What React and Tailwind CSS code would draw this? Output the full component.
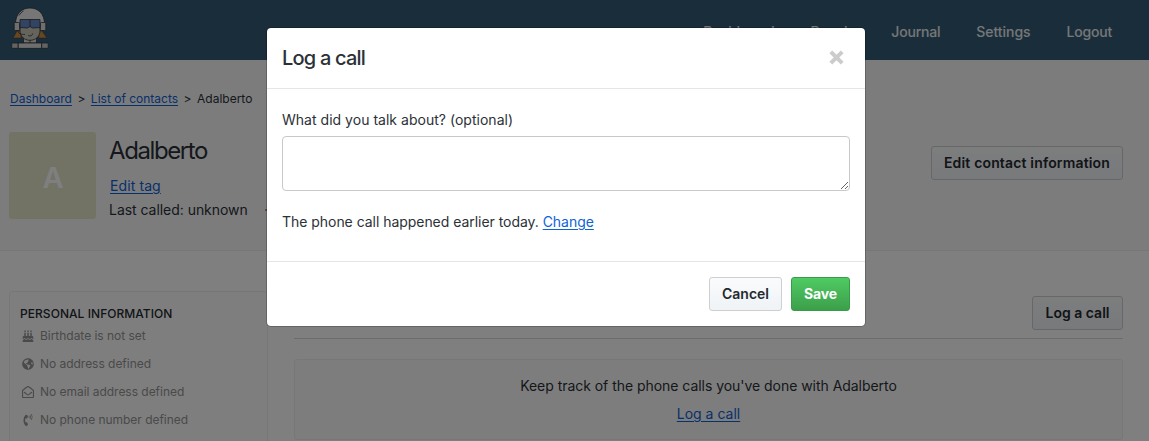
import { FaBirthdayCake, FaGlobeAmericas, FaRegEnvelopeOpen, FaPhoneVolume } from "react-icons/fa";

const link = "text-[#0f62d6] underline underline-offset-2";
const button =
  "h-[34px] rounded-[3px] border border-[#cdcfd1] bg-linear-to-b from-[#fafbfc] to-[#eff3f6] pb-0.5 text-[14px] font-semibold text-[#24292e] whitespace-nowrap flex items-center justify-center";

function Logo() {
  return (
    <svg width="38" height="43" viewBox="0 0 38 43" className="block" stroke="#30343c" strokeWidth="0.8">
      <path d="M6 24 2.200 31h8V24zM31 24l4.800 7h-8V24z" fill="#cf8f40" strokeWidth="0.4" />
      <path d="M12.500 30h13v6h-13z" fill="#dcdcdc" />
      <path d="M19 32v4" />
      <path d="M9 19v5c0 5 4 9.300 10 9.300S29 29 29 24v-5z" fill="#c9c6b8" />
      <path d="M4.500 17C4.500 7 10.500 1 19 1s14.500 6 14.500 16z" fill="#ececec" />
      <path d="M8 8.500c1.200-2 2.600-3.500 4.500-4.500" fill="none" />
      <rect x="3.200" y="15.500" width="5.500" height="8" rx="1" fill="#dedede" />
      <rect x="29.300" y="15.500" width="5.500" height="8" rx="1" fill="#dedede" />
      <path d="M9 12.500h20v8l-7.500.5-2.500-1.500L16.500 21 9 20.500z" fill="#6488c4" />
      <path d="M19 12.500v7" />
      <path d="M7 24c0 2.500 3 3.500 7 3.500M17 28c1 1.600 4.500 1.300 4.500-1.500" fill="none" />
      <rect x="0.700" y="36" width="6.500" height="5.300" rx="0.800" fill="#c6c6c6" />
      <rect x="7.200" y="36" width="23.500" height="5.300" fill="#dcdcdc" />
      <rect x="30.700" y="36" width="6.500" height="5.300" rx="0.800" fill="#c6c6c6" />
    </svg>
  );
}

function Fact({ icon: Icon, children }) {
  return (
    <li className="flex h-7 items-center text-[12px] tracking-[-0.03px] text-[#949494]">
      <span className="mr-[5px] flex w-[14px] justify-center text-[12px]">
        <Icon />
      </span>
      {children}
    </li>
  );
}

function Header() {
  return (
    <header className="flex h-[60px] bg-[#345a74] pl-[11px] pr-[37px]">
      <div className="pt-[7px]">
        <Logo />
      </div>
      <nav className="ml-auto flex items-center gap-[36px] pt-[3px] text-[14px] font-medium tracking-[-0.2px] text-white/90">
        <a>Dashboard</a>
        <a>People</a>
        <a>Journal</a>
        <a className="tracking-[-0.05px]">Settings</a>
        <a>Logout</a>
      </nav>
    </header>
  );
}

function ContactHeader() {
  return (
    <section className="h-[191px] border-b border-[#eee] bg-[#f9f9fb] pl-[10px] pr-[26px]">
      <div className="flex h-[72px] items-start gap-[5.5px] pt-[29px] text-[12px] leading-5">
        <a className={link}>Dashboard</a>
        <span>&gt;</span>
        <a className={link}>List of contacts</a>
        <span>&gt;</span>
        <span>Adalberto</span>
      </div>
      <div className="-ml-px flex">
        <div className="flex size-[87px] items-center justify-center rounded-[3px] bg-[#e5e5cb] pt-1 pl-px text-[29px] font-semibold text-white">
          A
        </div>
        <div className="ml-[13px]">
          <h1 className="mt-[3px] text-[24px] leading-8 tracking-[-1.4px]">Adalberto</h1>
          <div className="mt-[7px] pl-px text-[14px] leading-6 tracking-[0.1px]">
            <a className={link}>Edit tag</a>
          </div>
          <div className="flex items-center text-[14px] leading-6 tracking-[-0.04px]">
            Last called: unknown
            <span className="ml-[17px] h-0.5 w-1 bg-[#c98f70]" />
          </div>
        </div>
        <div className={`${button} ml-auto mt-[14px] w-[192px] tracking-[0.16px]`}>Edit contact information</div>
      </div>
    </section>
  );
}

function Body() {
  return (
    <main className="flex h-[190px] items-start bg-white pl-[9px] pr-[26px]">
      <aside className="mt-10 h-[200px] w-[259px] shrink-0 rounded-[3px] border border-[#eee] bg-[#fdfdfd] pl-[11px] pt-[12px]">
        <h3 className="-ml-px text-[12px] font-medium leading-5 tracking-[0.05px] text-[#24292e]">PERSONAL INFORMATION</h3>
        <ul className="-mt-0.5">
          <Fact icon={FaBirthdayCake}>Birthdate is not set</Fact>
          <Fact icon={FaGlobeAmericas}>No address defined</Fact>
          <Fact icon={FaRegEnvelopeOpen}>No email address defined</Fact>
          <Fact icon={FaPhoneVolume}>No phone number defined</Fact>
        </ul>
      </aside>
      <div className="ml-[26px] flex-1 pt-[45px]">
        <div className="flex h-[43px] justify-end border-b border-[#d9d9d9]">
          <div className={`${button} w-[91px]`}>Log a call</div>
        </div>
        <div className="mt-5 flex h-[81px] flex-col items-center rounded-[3px] border border-[#eee] bg-[#fbfbfb] pt-[14px] text-[14px] leading-6">
          <p className="tracking-[-0.04px]">Keep track of the phone calls you've done with Adalberto</p>
          <a className={`${link} mt-1`}>Log a call</a>
        </div>
      </div>
    </main>
  );
}

function CallDialog() {
  return (
    <div className="flex h-[300px] w-[600px] flex-col rounded-[5px] border border-black/20 bg-white bg-clip-padding">
      <div className="flex h-[61px] items-center justify-between border-b border-[#e5e5e5] pl-[15px] pr-[21px]">
        <h2 className="text-[20px] font-medium tracking-[-0.8px]">Log a call</h2>
        <svg width="15" height="15" viewBox="0 0 15 15" stroke="#ccc" strokeWidth="4" className="-mt-0.5">
          <path d="m1.800 1.800 11.400 11.400M13.200 1.800 1.800 13.200" />
        </svg>
      </div>
      <div className="h-[172px] px-[15px] pt-5 text-[14px] leading-[22px] tracking-[-0.04px]">
        <label className="block tracking-[0.02px]">What did you talk about? (optional)</label>
        <textarea className="mt-[5px] block h-[55px] w-full resize rounded-[4px] border border-[#c8c8c8]" />
        <p className="mt-5">
          The phone call happened earlier today. <a className={link}>Change</a>
        </p>
      </div>
      <div className="flex flex-1 justify-end gap-[9px] border-t border-[#e5e5e5] px-[15px] pt-[15px]">
        <button className={`${button} w-[73px]`}>Cancel</button>
        <button className="h-[34px] w-[59px] rounded-[3px] border border-[#389b47] bg-linear-to-b from-[#4fcb63] to-[#3c9f4a] pb-0.5 text-[14px] font-bold tracking-[-0.15px] text-white">
          Save
        </button>
      </div>
    </div>
  );
}

export default function App() {
  return (
    <div className="relative h-[441px] w-[1149px] overflow-hidden bg-white font-['Inter','Liberation_Sans',sans-serif] text-[#2b3137]">
      <Header />
      <ContactHeader />
      <Body />
      <div className="absolute inset-0 bg-black/50 pl-[266px] pt-[27px]">
        <CallDialog />
      </div>
    </div>
  );
}
